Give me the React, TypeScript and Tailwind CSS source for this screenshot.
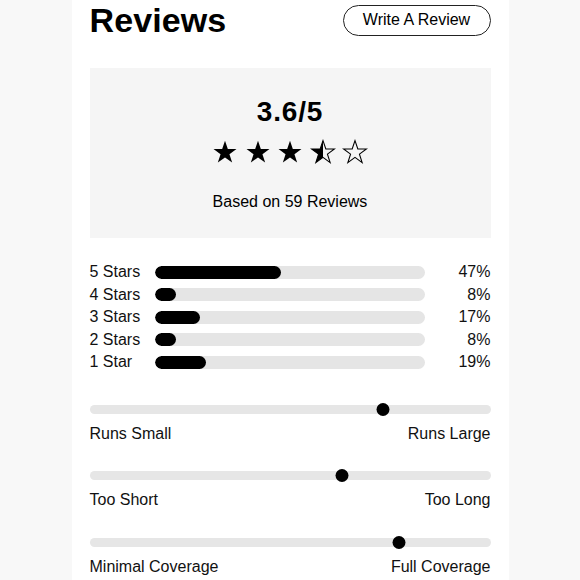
import React from "react";

const STAR = "M12 1.5 L14.6 9.2 L22.6 9.2 L16.1 14 L18.6 21.8 L12 17 L5.4 21.8 L7.9 14 L1.4 9.2 L9.4 9.2 Z";

function Star({ type, id }: { type: "full" | "half" | "empty"; id: string }) {
  return (
    <svg width="26" height="26" viewBox="0 0 24 24">
      <defs>
        <clipPath id={id}>
          <rect x="0" y="0" width="12" height="24" />
        </clipPath>
      </defs>
      {type === "full" && <path d={STAR} fill="#000" />}
      {type === "empty" && <path d={STAR} fill="none" stroke="#000" strokeWidth="1" strokeLinejoin="miter" />}
      {type === "half" && (
        <>
          <path d={STAR} fill="none" stroke="#000" strokeWidth="1" />
          <path d={STAR} fill="#000" clipPath={`url(#${id})`} />
        </>
      )}
    </svg>
  );
}

const dist = [
  { label: "5 Stars", pct: 47 },
  { label: "4 Stars", pct: 8 },
  { label: "3 Stars", pct: 17 },
  { label: "2 Stars", pct: 8 },
  { label: "1 Star", pct: 19 },
];

const fits = [
  { left: "Runs Small", right: "Runs Large", pos: 73.2 },
  { left: "Too Short", right: "Too Long", pos: 63 },
  { left: "Minimal Coverage", right: "Full Coverage", pos: 77.3 },
];

export default function App() {
  return (
    <div
      className="w-[580px] h-[580px] bg-[#f8f8f8] flex justify-center overflow-hidden text-[#111]"
      style={{ fontFamily: '"Liberation Sans", Arial, sans-serif' }}
    >
      <div className="w-[437px] h-full bg-white px-[18px] flex flex-col">
        <div className="h-[40px] flex items-center justify-between">
          <h1 className="text-[34px] font-bold leading-none text-black tracking-[0.1px]">Reviews</h1>
          <button className="h-[31px] w-[148px] rounded-full border-[1.5px] border-[#222] bg-white text-[16px] text-black flex items-center justify-center">
            Write A Review
          </button>
        </div>

        <div className="mt-[28px] h-[170px] bg-[#f5f5f5] flex flex-col items-center pt-[28px]">
          <div className="text-[28px] font-bold leading-[32px] text-black tracking-[0.8px]">3.6/5</div>
          <div className="mt-[11px] flex gap-[6.5px] h-[26px]">
            <Star type="full" id="s1" />
            <Star type="full" id="s2" />
            <Star type="full" id="s3" />
            <Star type="half" id="s4" />
            <Star type="empty" id="s5" />
          </div>
          <div className="mt-[27px] text-[16px] leading-[20px] text-black">Based on 59 Reviews</div>
        </div>

        <div className="mt-[23px] flex flex-col">
          {dist.map((d) => (
            <div key={d.label} className="h-[22.5px] flex items-center">
              <div className="w-[65px] text-[16px] leading-[20px]">{d.label}</div>
              <div className="w-[270px] h-[13px] rounded-full bg-[#e5e5e5] overflow-hidden">
                <div className="h-full rounded-full bg-black" style={{ width: `${d.pct}%` }} />
              </div>
              <div className="flex-1 text-right text-[16px] leading-[20px]">{d.pct}%</div>
            </div>
          ))}
        </div>

        <div className="mt-[29px] flex flex-col gap-[25.6px]">
          {fits.map((f) => (
            <div key={f.left} className="flex flex-col gap-[8px]">
              <div className="relative h-[13px] flex items-center">
                <div className="w-full h-[9px] rounded-full bg-[#e6e6e6]" />
                <div
                  className="absolute top-0 w-[13px] h-[13px] rounded-full bg-black -translate-x-1/2"
                  style={{ left: `${f.pos}%` }}
                />
              </div>
              <div className="flex justify-between text-[16px] leading-[20px]">
                <span>{f.left}</span>
                <span>{f.right}</span>
              </div>
            </div>
          ))}
        </div>
      </div>
    </div>
  );
}
